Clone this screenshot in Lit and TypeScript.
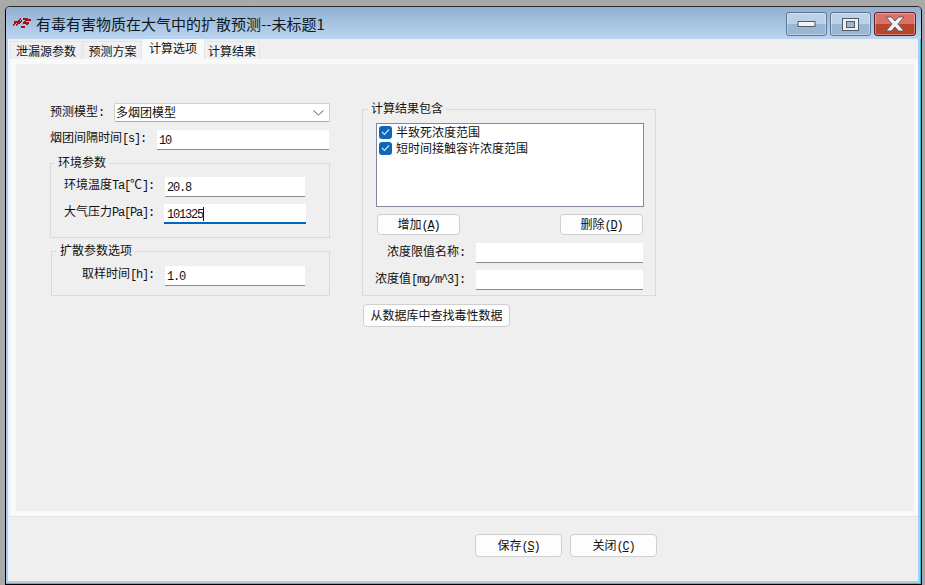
import { LitElement, html, css, TemplateResult } from "lit";
import { customElement } from "lit/decorators.js";

function mix(text: string): (TemplateResult | string)[] {
  return text
    .split(/([\x20-\x7e]+)/)
    .filter((p) => p)
    .map((p) => (/^[\x20-\x7e]+$/.test(p) ? html`<span class="lat">${p}</span>` : p));
}

function mnemonic(label: string, key: string) {
  return html`${label}<span class="lat">(<u>${key}</u>)</span>`;
}

@customElement("app-root")
export class AppRoot extends LitElement {
  static styles = css`
    :host {
      display: block;
      width: 925px;
      height: 585px;
      box-sizing: border-box;
      padding: 6px 3px 0 5px;
      background: #a9a9a9;
      font-family: "Noto Sans CJK SC", "Liberation Sans", sans-serif;
      font-size: 12px;
      line-height: 16px;
      color: #111;
      overflow: hidden;
    }
    .lat {
      font-family: "Liberation Mono", monospace;
      font-size: 12px;
      letter-spacing: -1.2px;
    }
    u {
      text-underline-offset: 1px;
    }
    .win {
      height: 100%;
      box-sizing: border-box;
      border: 1px solid #000;
      border-top-color: #2a2a2a;
      border-radius: 5px 5px 0 0;
      background: #aacfea;
      box-shadow: inset -1px -1px 0 #35c0e8;
      display: flex;
      flex-direction: column;
      padding: 0 3px 3px 3px;
    }
    .titlebar {
      height: 32px;
      margin: 0 -3px;
      padding: 0 5px 0 6px;
      border-radius: 4px 4px 0 0;
      background: linear-gradient(#92afd0, #bbd5f0);
      display: flex;
      align-items: center;
      flex: none;
    }
    .logo {
      width: 20px;
      height: 12px;
      margin-right: 4px;
      flex: none;
    }
    .title {
      font-size: 15px;
      color: #0e1823;
      flex: 1;
      line-height: 20px;
      margin-top: 2px;
    }
    .title .lat {
      font-family: "Noto Sans CJK SC", sans-serif;
      font-size: 15px;
      letter-spacing: 0;
    }
    .caps {
      display: flex;
      gap: 3px;
      align-self: flex-start;
      padding-top: 5px;
    }
    .cap {
      width: 41px;
      height: 24px;
      box-sizing: border-box;
      border: 1px solid #5d7894;
      border-radius: 3px;
      background: linear-gradient(#bcd1e8 0 50%, #9ab6d2 50% 100%);
      box-shadow: inset 0 0 0 1px rgba(255, 255, 255, 0.35);
      display: flex;
      align-items: center;
      justify-content: center;
    }
    .cap.close {
      width: 42px;
      border-color: #5a1f27;
      background: linear-gradient(#d9736a 0 50%, #b9442c 50% 100%);
    }
    .cap svg {
      display: block;
    }
    .client {
      flex: 1;
      background: #efefef;
      display: flex;
      flex-direction: column;
      min-height: 0;
      border-left: 1px solid #eef0fa;
      margin-left: -1px;
    }
    .tabs {
      display: flex;
      height: 20px;
      padding-left: 1px;
      flex: none;
      align-items: flex-end;
    }
    .tab {
      height: 18px;
      box-sizing: border-box;
      border: 1px solid #e4e4e4;
      border-bottom: none;
      line-height: 18px;
      text-align: center;
      background: #f0f0f0;
    }
    .tab.t1 {
      width: 72px;
      margin-right: 1px;
    }
    .tab.t2 {
      width: 59px;
    }
    .tab.sel {
      width: 62px;
      height: 20px;
      background: #f9f9f9;
      border: none;
      line-height: 17px;
    }
    .tab.t4 {
      width: 56px;
    }
    .panel {
      flex: none;
      height: 457px;
      box-sizing: border-box;
      margin-left: 1px;
      padding: 5px 4px 5px 6px;
      background: #f9f9f9;
    }
    .inner {
      height: 100%;
      background: #efefef;
      display: flex;
      align-items: flex-start;
      padding: 39px 0 0 34px;
      box-sizing: border-box;
      gap: 32px;
    }
    .divider {
      height: 1px;
      background: #e3e3e3;
      flex: none;
    }
    .footer {
      flex: 1;
      display: flex;
      gap: 8px;
      padding: 17px 0 0 466px;
      align-items: flex-start;
    }
    .left {
      width: 280px;
      flex: none;
    }
    .right {
      width: 294px;
      flex: none;
      padding-top: 6px;
    }
    .row {
      display: flex;
      align-items: center;
    }
    .label {
      flex: none;
      white-space: nowrap;
      margin-top: -4px;
    }
    .field {
      height: 20px;
      box-sizing: border-box;
      background: #fff;
      border-bottom: 1px solid #8a8a8a;
      padding-left: 2px;
      line-height: 17px;
      flex: none;
      white-space: nowrap;
    }
    .field.focus {
      border-bottom: 2px solid #0067c0;
    }
    .caret {
      display: inline-block;
      width: 1px;
      height: 14px;
      background: #111;
      vertical-align: -3px;
    }
    .select {
      width: 216px;
      height: 19px;
      box-sizing: border-box;
      border: 1px solid #d0d0d0;
      border-bottom-color: #a8a8a8;
      border-radius: 2px;
      background: #fff;
      padding: 0 5px 0 1px;
      display: flex;
      align-items: center;
      justify-content: space-between;
      margin-left: 10px;
    }
    .select span {
      margin-top: -2px;
    }
    .top-row .label {
      margin-top: -2px;
    }
    .group {
      position: relative;
      box-sizing: border-box;
      border: 1px solid #dadada;
    }
    .legend {
      position: absolute;
      top: -10px;
      left: 4px;
      padding: 0 3px;
      background: #efefef;
      white-space: nowrap;
    }
    .env {
      height: 75px;
      margin-top: 13px;
      padding-top: 13px;
    }
    .spread {
      height: 45px;
      margin-top: 13px;
      margin-left: 1px;
      padding-top: 14px;
    }
    .spread .legend {
      left: 5px;
    }
    .env .label,
    .spread .label {
      width: 103px;
      text-align: right;
    }
    .spread .label {
      width: 102px;
    }
    .env .field,
    .spread .field {
      width: 140px;
      margin-left: 11px;
    }
    .env .row + .row {
      margin-top: 7px;
    }
    .env .field.focus {
      width: 142px;
      margin-left: 10px;
      padding-left: 3px;
    }
    .interval {
      margin-top: 8px;
    }
    .interval .field {
      width: 172px;
      margin-left: 11px;
    }
    .results {
      height: 187px;
      padding: 13px 11px 0 13px;
    }
    .results .legend {
      left: 5px;
    }
    .list {
      height: 84px;
      box-sizing: border-box;
      border: 1px solid #82879b;
      background: #fff;
      padding: 0 2px;
    }
    .item {
      display: flex;
      align-items: center;
      gap: 4px;
      height: 16px;
      line-height: 15px;
    }
    .item span:last-child {
      margin-top: -2px;
    }
    .check {
      width: 13px;
      height: 13px;
      border-radius: 3px;
      background: #0f67bd;
      flex: none;
      display: flex;
      align-items: center;
      justify-content: center;
    }
    .btn {
      box-sizing: border-box;
      border: 1px solid #cfcfcf;
      border-radius: 4px;
      background: #fdfdfd;
      text-align: center;
      white-space: nowrap;
    }
    .actions {
      display: flex;
      justify-content: space-between;
      margin: 7px 1px 0 1px;
    }
    .actions .btn {
      width: 83px;
      height: 21px;
      line-height: 17px;
    }
    .pair {
      justify-content: flex-end;
      margin-right: 1px;
    }
    .pair .field {
      width: 167px;
      margin-left: 11px;
    }
    .pair .label {
      margin-top: -2px;
    }
    .pair.first {
      margin-top: 8px;
    }
    .pair.second {
      margin-top: 7px;
    }
    .db {
      display: block;
      width: 147px;
      height: 23px;
      line-height: 19px;
      margin: 8px 0 0 1px;
    }
    .foot-btn {
      width: 87px;
      height: 23px;
      line-height: 19px;
    }
  `;

  render() {
    return html`
      <div class="win">
        <div class="titlebar">
          <svg class="logo" viewBox="0 0 20 12" shape-rendering="crispEdges">
            <path
              d="M1 8 L9 2 M4 8 L10 4 M2 5 H8 M11 2 H15 L12 6 H16 L15 8 M15 3 H19"
              fill="none"
              stroke="#a5121b"
              stroke-width="1.6"
            />
            <rect x="9" y="9" width="4" height="2" fill="#a5121b" />
          </svg>
          <div class="title">${mix("有毒有害物质在大气中的扩散预测--未标题1")}</div>
          <div class="caps">
            <div class="cap">
              <svg width="19" height="8" viewBox="0 0 19 8">
                <rect x="1" y="1.5" width="17" height="5" fill="#f4f4f4" stroke="#4d5a6b" />
              </svg>
            </div>
            <div class="cap">
              <svg width="19" height="15" viewBox="0 0 19 15">
                <rect x="1.5" y="1.5" width="16" height="12" fill="#eef0f3" stroke="#4d5a6b" />
                <rect x="5.5" y="4.5" width="8" height="6" fill="#9ab6d2" stroke="#4d5a6b" />
              </svg>
            </div>
            <div class="cap close">
              <svg width="22" height="16" viewBox="0 0 22 16">
                <path
                  d="M2 1 H7.5 L11 5 L14.5 1 H20 L14 8 L20 15 H14.5 L11 11 L7.5 15 H2 L8 8 Z"
                  fill="#f2f2f2"
                  stroke="#6a5560"
                />
              </svg>
            </div>
          </div>
        </div>
        <div class="client">
          <div class="tabs">
            <div class="tab t1">泄漏源参数</div>
            <div class="tab t2">预测方案</div>
            <div class="tab sel">计算选项</div>
            <div class="tab t4">计算结果</div>
          </div>
          <div class="panel">
            <div class="inner">
              <div class="left">
                <div class="row top-row">
                  <div class="label">${mix("预测模型:")}</div>
                  <div class="select">
                    <span>多烟团模型</span>
                    <svg width="11" height="6" viewBox="0 0 11 6">
                      <path d="M0.5 0.5 L5.5 5 L10.5 0.5" fill="none" stroke="#555" />
                    </svg>
                  </div>
                </div>
                <div class="row interval">
                  <div class="label">${mix("烟团间隔时间[s]:")}</div>
                  <div class="field">${mix("10")}</div>
                </div>
                <div class="group env">
                  <div class="legend">环境参数</div>
                  <div class="row">
                    <div class="label">${mix("环境温度Ta[℃]:")}</div>
                    <div class="field">${mix("20.8")}</div>
                  </div>
                  <div class="row">
                    <div class="label">${mix("大气压力Pa[Pa]:")}</div>
                    <div class="field focus">${mix("101325")}<span class="caret"></span></div>
                  </div>
                </div>
                <div class="group spread">
                  <div class="legend">扩散参数选项</div>
                  <div class="row">
                    <div class="label">${mix("取样时间[h]:")}</div>
                    <div class="field">${mix("1.0")}</div>
                  </div>
                </div>
              </div>
              <div class="right">
                <div class="group results">
                  <div class="legend">计算结果包含</div>
                  <div class="list">
                    ${["半致死浓度范围", "短时间接触容许浓度范围"].map(
                      (t) => html`<div class="item">
                        <span class="check">
                          <svg width="9" height="8" viewBox="0 0 9 8">
                            <path d="M1 4 L3.5 6.5 L8 1.5" fill="none" stroke="#cfe3f7" stroke-width="1.2" />
                          </svg>
                        </span>
                        <span>${t}</span>
                      </div>`
                    )}
                  </div>
                  <div class="actions">
                    <div class="btn">${mnemonic("增加", "A")}</div>
                    <div class="btn">${mnemonic("删除", "D")}</div>
                  </div>
                  <div class="row pair first">
                    <div class="label">${mix("浓度限值名称:")}</div>
                    <div class="field"></div>
                  </div>
                  <div class="row pair second">
                    <div class="label">${mix("浓度值[mg/m^3]:")}</div>
                    <div class="field"></div>
                  </div>
                </div>
                <div class="btn db">从数据库中查找毒性数据</div>
              </div>
            </div>
          </div>
          <div class="divider"></div>
          <div class="footer">
            <div class="btn foot-btn">${mnemonic("保存", "S")}</div>
            <div class="btn foot-btn">${mnemonic("关闭", "C")}</div>
          </div>
        </div>
      </div>
    `;
  }
}
